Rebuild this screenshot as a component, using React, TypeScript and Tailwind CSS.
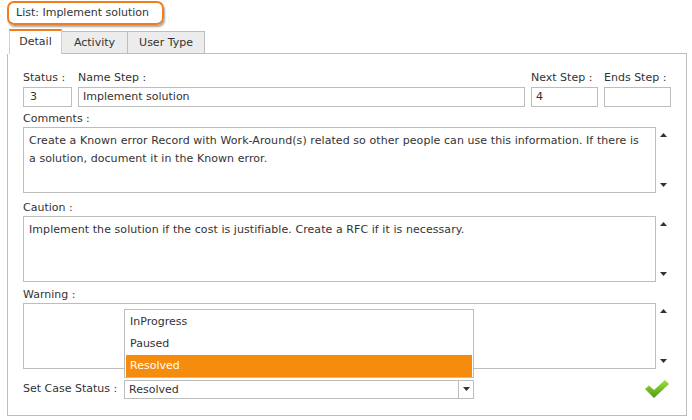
import React from "react";

const ScrollArrows = () => (
  <div className="flex w-[15px] flex-col items-center justify-between py-[6px]">
    <svg width="7" height="4" viewBox="0 0 7 4"><path d="M0 4 L3.5 0 L7 4 Z" fill="#333" /></svg>
    <svg width="7" height="4" viewBox="0 0 7 4"><path d="M0 0 L7 0 L3.5 4 Z" fill="#333" /></svg>
  </div>
);

const Area = ({ text }: { text?: string }) => (
  <div className="flex">
    <div className="h-[66px] w-[633px] border border-[#bdbdbd] bg-white py-[4px] pl-[5px] pr-[12px] leading-[18px] tracking-[0.07px] text-[#333]">
      {text}
    </div>
    <ScrollArrows />
  </div>
);

export default function App() {
  return (
    <div
      className="relative h-[420px] w-[692px] bg-white text-[11px] text-[#333]"
      style={{ fontFamily: '"DejaVu Sans", sans-serif' }}
    >
      <div className="pl-[7px] pt-[1px]">
        <div className="inline-flex h-[24px] w-[157px] items-center rounded-[7px] border-2 border-[#f07d1e] pl-[7px] shadow-[1px_2px_2px_rgba(0,0,0,0.35)]">
          List: Implement solution
        </div>
      </div>
      <div className="mt-[4px] flex items-end pl-[9px]">
        <div className="flex h-[25px] w-[53px] items-center justify-center border-x border-t-2 border-x-[#cfcfcf] border-t-[#f07d1e] bg-white">
          Detail
        </div>
        <div className="flex h-[23px] w-[66px] items-center justify-center border-b border-r border-t border-[#bdbdbd] bg-[#ececec] pt-px">
          Activity
        </div>
        <div className="flex h-[23px] w-[77px] items-center justify-center border-b border-r border-t border-[#bdbdbd] bg-[#ececec] pt-px">
          User Type
        </div>
        <div className="mr-[5px] h-px flex-1 bg-[#bdbdbd]" />
      </div>
      <div className="ml-[7px] h-[362px] w-[680px] border-x border-b border-[#bdbdbd] pl-[15px] pt-[15px]">
        <div className="grid grid-cols-[49px_447px_67px_67px] gap-x-[6px]">
          <div className="h-[18px] leading-[18px]">Status :</div>
          <div className="h-[18px] leading-[18px]">Name Step :</div>
          <div className="h-[18px] leading-[18px]">Next Step :</div>
          <div className="h-[18px] leading-[18px]">Ends Step :</div>
          <div className="h-[20px] border border-[#bdbdbd] pl-[6px] leading-[18px]">3</div>
          <div className="h-[20px] border border-[#bdbdbd] pl-[4px] leading-[18px]">Implement solution</div>
          <div className="h-[20px] border border-[#bdbdbd] pl-[4px] leading-[18px]">4</div>
          <div className="h-[20px] border border-[#bdbdbd] pl-[4px] leading-[18px]" />
        </div>
        <div className="mt-[4px] h-[16px] leading-[16px]">Comments :</div>
        <Area text="Create a Known error Record with Work-Around(s) related so other people can use this information. If there is a solution, document it in the Known error." />
        <div className="mt-[6px] h-[17px] leading-[17px]">Caution :</div>
        <Area text="Implement the solution if the cost is justifiable. Create a RFC if it is necessary." />
        <div className="mt-[5px] h-[16px] leading-[16px]">Warning :</div>
        <Area />
        <div className="mt-[10px] flex items-center">
          <div className="w-[101px]">Set Case Status :</div>
          <div className="flex h-[19px] w-[350px] border border-[#bdbdbd]">
            <div className="flex-1 pl-[4px] leading-[17px]">Resolved</div>
            <div className="flex w-[15px] items-center justify-center border-l border-[#bdbdbd]">
              <svg width="7" height="4" viewBox="0 0 7 4"><path d="M0 0 L7 0 L3.5 4 Z" fill="#333" /></svg>
            </div>
          </div>
          <div className="ml-auto mr-[16px]">
            <svg width="26" height="20" viewBox="0 0 26 20">
              <defs>
                <linearGradient id="g" x1="0" y1="0" x2="0" y2="1">
                  <stop offset="0" stopColor="#9be33a" />
                  <stop offset="1" stopColor="#4e9b12" />
                </linearGradient>
              </defs>
              <path d="M1 10 L5 6.5 L10 11 L21 1 L25 5 L10 19 Z" fill="url(#g)" />
            </svg>
          </div>
        </div>
      </div>
      <div className="absolute left-[124px] top-[309px] w-[350px] border border-[#bdbdbd] bg-white px-px pt-px">
        <div className="h-[22px] pl-[4px] leading-[22px]">InProgress</div>
        <div className="h-[22px] pl-[4px] leading-[22px]">Paused</div>
        <div className="h-[22px] bg-[#f68c0d] pl-[4px] leading-[22px] text-white">Resolved</div>
      </div>
    </div>
  );
}
